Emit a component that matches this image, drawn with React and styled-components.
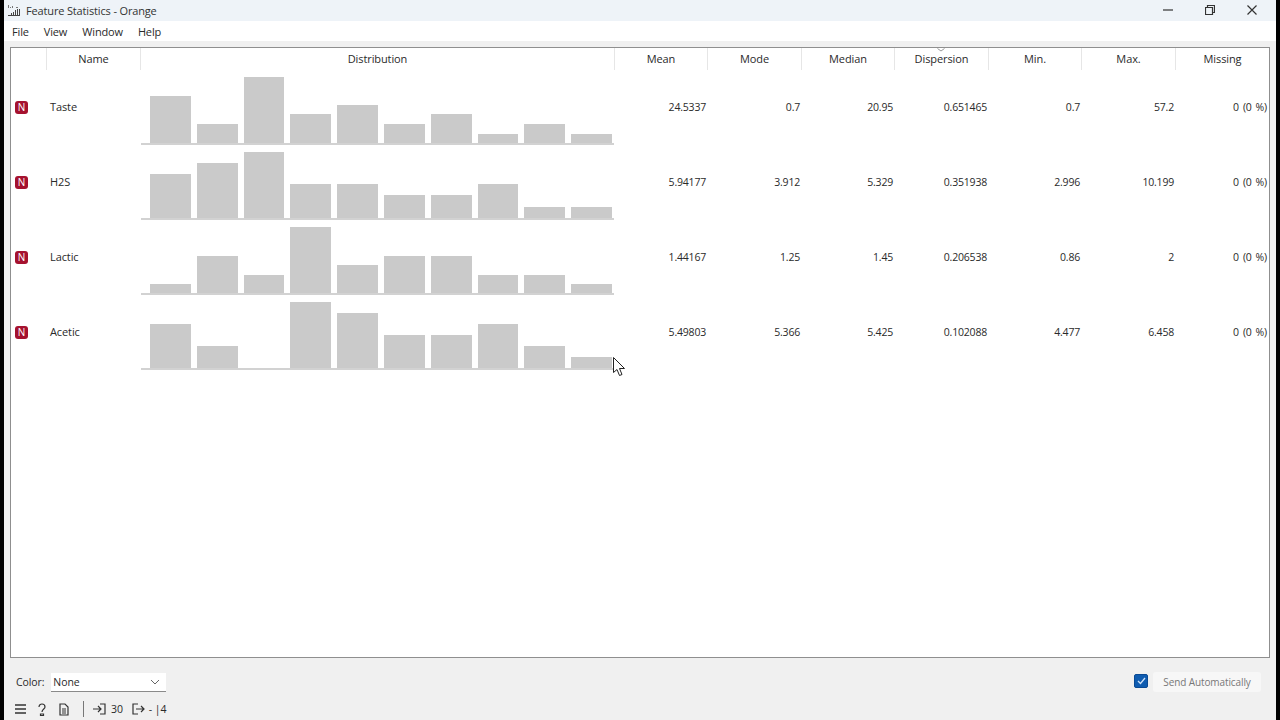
import React from 'react'
import styled, { createGlobalStyle } from 'styled-components'

const GlobalStyle = createGlobalStyle`
    html, body {
        margin: 0;
        padding: 0;
        background: #000;
    }
    body {
        font-family: "Open Sans", "Liberation Sans", sans-serif;
        font-size: 11px;
        color: #2a2a2a;
    }
`

const COLUMNS = '36px 94px 474px 93px 94px 93px 94px 93px 94px 1fr'

const features = [
    { name: 'Taste', bars: [47, 19, 66, 29, 38, 19, 29, 9, 19, 9], stats: ['24.5337', '0.7', '20.95', '0.651465', '0.7', '57.2', '0 (0 %)'] },
    { name: 'H2S', bars: [44, 55, 66, 34, 34, 23, 23, 34, 11, 11], stats: ['5.94177', '3.912', '5.329', '0.351938', '2.996', '10.199', '0 (0 %)'] },
    { name: 'Lactic', bars: [9, 37, 18, 66, 28, 37, 37, 18, 18, 9], stats: ['1.44167', '1.25', '1.45', '0.206538', '0.86', '2', '0 (0 %)'] },
    { name: 'Acetic', bars: [44, 22, 0, 66, 55, 33, 33, 44, 22, 11], stats: ['5.49803', '5.366', '5.425', '0.102088', '4.477', '6.458', '0 (0 %)'] },
]

const headers = ['Mean', 'Mode', 'Median', 'Dispersion', 'Min.', 'Max.', 'Missing']

const Screen = styled.div`
    width: 1272px;
    height: 720px;
    margin-left: 4px;
    background: #f0f0f0;
    display: flex;
    flex-direction: column;
    overflow: hidden;
    position: relative;
`

const TitleBar = styled.div`
    height: 21px;
    flex: none;
    display: flex;
    align-items: center;
    padding-left: 4px;
    background: #eef3f8;
    font-size: 11px;
    letter-spacing: -0.15px;
    color: #333;
`

const TitleText = styled.span`
    margin-left: 6px;
`

const WindowButtons = styled.div`
    margin: 0 0 2px auto;
    display: flex;
    align-items: center;
    gap: 32px;
    padding-right: 19px;
`

const MenuBar = styled.div`
    height: 20px;
    flex: none;
    display: flex;
    align-items: center;
    gap: 15px;
    padding-left: 8px;
    background: #fff;
    font-size: 11px;
    letter-spacing: -0.15px;
`

const Table = styled.div`
    height: 609px;
    flex: none;
    margin: 6px 6px 0 6px;
    background: #fff;
    border: 1px solid #8f8f8f;
`

const HeaderRow = styled.div`
    height: 22px;
    display: grid;
    grid-template-columns: ${COLUMNS};
`

const HeaderCell = styled.div`
    display: flex;
    align-items: center;
    justify-content: center;
    position: relative;
    padding-bottom: 2px;
    letter-spacing: -0.1px;
    border-right: ${props => (props.$last ? 'none' : '1px solid #e6e6e6')};
`

const SortArrow = styled.svg`
    position: absolute;
    top: 0;
    left: 42px;
`

const Row = styled.div`
    height: 75px;
    display: grid;
    grid-template-columns: ${COLUMNS};
    align-items: center;
`

const TypeBadge = styled.div`
    width: 13px;
    height: 13px;
    margin: 0 0 1px 4px;
    border-radius: 3px;
    background: #a5122f;
    color: #fff;
    font-size: 10px;
    line-height: 13px;
    text-align: center;
`

const NameCell = styled.div`
    padding: 0 0 2px 3px;
    letter-spacing: -0.1px;
`

const Histogram = styled.div`
    align-self: end;
    height: 75px;
    margin-right: 1px;
    padding: 0 2px 0 9px;
    display: flex;
    align-items: flex-end;
    gap: 6px;
    border-bottom: 2px solid #d2d2d2;
    box-sizing: border-box;
`

const Bar = styled.div`
    flex: 1;
    background: #cacaca;
`

const NumberCell = styled.div`
    text-align: right;
    padding: 0 2px 2px 0;
    font-size: 10.5px;
    letter-spacing: -0.2px;
    word-spacing: 1.5px;
`

const Footer = styled.div`
    flex: 1;
    display: flex;
    flex-direction: column;
    font-size: 10.5px;
    letter-spacing: -0.1px;
`

const ControlRow = styled.div`
    height: 24px;
    margin-top: 12px;
    display: flex;
    align-items: center;
    padding: 0 15px 0 12px;
`

const ColorSelect = styled.div`
    width: 115px;
    height: 19px;
    margin-left: 7px;
    padding: 0 6px 0 2px;
    box-sizing: border-box;
    display: flex;
    align-items: center;
    justify-content: space-between;
    background: #fff;
    border-bottom: 1px solid #8a8a8a;
`

const Checkbox = styled.div`
    width: 12px;
    height: 12px;
    margin: 0 0 2px auto;
    border-radius: 2px;
    background: #0f5cb0;
    border: 1px solid #0a4a94;
    display: flex;
    align-items: center;
    justify-content: center;
`

const SendButton = styled.div`
    width: 108px;
    height: 20px;
    margin-left: 5px;
    display: flex;
    align-items: center;
    justify-content: center;
    background: #f7f7f7;
    border-radius: 3px;
    color: #777;
    font-size: 10px;
`

const StatusBar = styled.div`
    height: 22px;
    margin-top: 4px;
    display: flex;
    align-items: center;
    padding-left: 11px;
    font-size: 10.5px;
`

const StatusIcon = styled.svg`
    margin-right: ${props => props.$gap || 8}px;
    flex: none;
`

const Divider = styled.div`
    width: 1px;
    height: 16px;
    margin: 0 9px 0 6px;
    background: #777;
`

const StatusText = styled.span`
    margin-right: ${props => props.$gap || 0}px;
`

const Cursor = styled.svg`
    position: absolute;
    left: 609px;
    top: 357px;
`

const Stroke = { fill: 'none', stroke: '#333', strokeWidth: 1.2 }

export default function App() {
    return (
        <Screen>
            <GlobalStyle />
            <TitleBar>
                <svg width="12" height="12" viewBox="0 0 12 12">
                    <path d="M0 0h1v3H0zM2 2h1v1H2zM4 1h1v2H4zM8 2h2v1H8z" fill="#777" />
                    <path d="M0 10h12v1H0zM3 8h1v2H3zM5 7h1v3H5zM7 5h1v5H7zM9 4h1v6H9zM11 4h1v6h-1z" fill="#444" />
                </svg>
                <TitleText>Feature Statistics - Orange</TitleText>
                <WindowButtons>
                    <svg width="10" height="10" viewBox="0 0 10 10"><path d="M0 5h10" {...Stroke} /></svg>
                    <svg width="10" height="10" viewBox="0 0 10 10"><path d="M0.5 2.5h7v7h-7zM2.5 2.5v-2h7v7h-2" {...Stroke} /></svg>
                    <svg width="10" height="10" viewBox="0 0 10 10"><path d="M0.5 0.5l9 9M9.5 0.5l-9 9" {...Stroke} /></svg>
                </WindowButtons>
            </TitleBar>
            <MenuBar>
                <span>File</span>
                <span>View</span>
                <span>Window</span>
                <span>Help</span>
            </MenuBar>
            <Table>
                <HeaderRow>
                    <HeaderCell />
                    <HeaderCell>Name</HeaderCell>
                    <HeaderCell>Distribution</HeaderCell>
                    {headers.map((h, i) => (
                        <HeaderCell key={h} $last={i === headers.length - 1}>
                            {h}
                            {h === 'Dispersion' && (
                                <SortArrow width="8" height="4" viewBox="0 0 8 4"><path d="M0.5 0.5L4 3L7.5 0.5" fill="none" stroke="#999" /></SortArrow>
                            )}
                        </HeaderCell>
                    ))}
                </HeaderRow>
                {features.map(f => (
                    <Row key={f.name}>
                        <TypeBadge>N</TypeBadge>
                        <NameCell>{f.name}</NameCell>
                        <Histogram>
                            {f.bars.map((b, i) => (
                                <Bar key={i} style={{ height: b }} />
                            ))}
                        </Histogram>
                        {f.stats.map((s, i) => (
                            <NumberCell key={i}>{s}</NumberCell>
                        ))}
                    </Row>
                ))}
            </Table>
            <Footer>
                <ControlRow>
                    <span>Color:</span>
                    <ColorSelect>
                        <span>None</span>
                        <svg width="10" height="6" viewBox="0 0 10 6"><path d="M1 1l4 4l4-4" fill="none" stroke="#666" /></svg>
                    </ColorSelect>
                    <Checkbox>
                        <svg width="9" height="8" viewBox="0 0 9 8"><path d="M1 4l2.5 2.5L8 1" fill="none" stroke="#cfe3fa" strokeWidth="1.3" /></svg>
                    </Checkbox>
                    <SendButton>Send Automatically</SendButton>
                </ControlRow>
                <StatusBar>
                    <StatusIcon width="12" height="10" viewBox="0 0 12 10" $gap={10}><path d="M0 1h11M0 5h11M0 9h11" {...Stroke} strokeWidth="1.5" /></StatusIcon>
                    <StatusIcon width="10" height="13" viewBox="0 0 10 13" $gap={12}><path d="M2 4c0-4 6-4 6 0c0 2-3 2-3 5M3.5 11h3v1.5h-3z" {...Stroke} /></StatusIcon>
                    <StatusIcon width="10" height="13" viewBox="0 0 10 13" $gap={8}><path d="M1 1h5l3 3v8H1zM3 6h4M3 8h4M3 10h4" {...Stroke} /></StatusIcon>
                    <Divider />
                    <StatusIcon width="13" height="12" viewBox="0 0 13 12" $gap={5}><path d="M7 1h5v10H7M0 6h8M5 3l3 3l-3 3" {...Stroke} /></StatusIcon>
                    <StatusText $gap={9}>30</StatusText>
                    <StatusIcon width="13" height="12" viewBox="0 0 13 12" $gap={4}><path d="M6 1H1v10h5M4 6h8M9 3l3 3l-3 3" {...Stroke} /></StatusIcon>
                    <StatusText>- |4</StatusText>
                </StatusBar>
            </Footer>
            <Cursor width="12" height="19" viewBox="0 0 12 19">
                <path d="M0.5 0.5v15l3.5-3l2.5 6l2.5-1l-2.5-6h5z" fill="#fff" stroke="#222" />
            </Cursor>
        </Screen>
    )
}
